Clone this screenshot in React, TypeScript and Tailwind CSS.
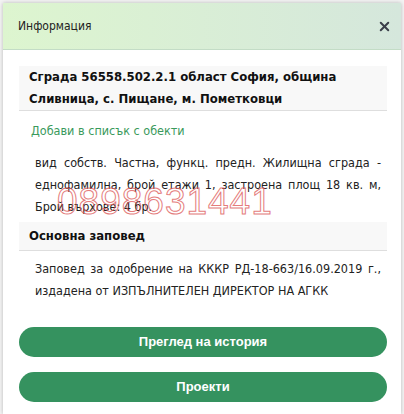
import { X } from 'lucide-react'

const body = "font-['DejaVu_Sans_Condensed','DejaVu_Sans',sans-serif]"

function SectionTitle({ children, className = '' }: { children: React.ReactNode; className?: string }) {
  return (
    <div className={`bg-[#f8f8f8] border-b border-[#dedede] px-[10px] text-[13px] font-bold text-[#111] ${className}`}>
      {children}
    </div>
  )
}

function GreenButton({ children }: { children: React.ReactNode }) {
  return (
    <button className="w-full h-[30px] rounded-full bg-[#35925f] text-white text-[13px] font-bold font-['Liberation_Sans',sans-serif]">
      {children}
    </button>
  )
}

export default function App() {
  return (
    <div className="w-[404px] h-[414px] bg-[#f4f4f4] pt-[3px] pl-[3px] pr-[3px] overflow-hidden">
      <div className={`h-full bg-white shadow-[0_0_4px_rgba(0,0,0,0.25)] flex flex-col ${body}`}>
        <div className="h-[47px] shrink-0 flex items-center justify-between pl-[15px] pr-[9px] bg-gradient-to-r from-[#ddf5cf] to-[#d5e7dc] border-b border-[#c3dcc6]">
          <span className="text-[12px] text-[#222]">Информация</span>
          <X className="w-[15px] h-[15px] text-[#3b3f4a]" strokeWidth={3.2} />
        </div>

        <div className="pl-[16px] pr-[14px] pt-[16px] flex flex-col">
          <SectionTitle className="leading-[22px]">
            Сграда 56558.502.2.1 област София, община Сливница, с. Пищане, м. Пометковци
          </SectionTitle>

          <div className="px-[12px] pt-[11px] text-[12.5px] leading-[18px] text-[#3a9a5c]">Добави в списък с обекти</div>

          <div className="relative pl-[16px] pr-[6px] pt-[12px] pb-[4px]">
            <p className="text-[12.5px] leading-[22px] text-[#222] text-justify">
              вид собств. Частна, функц. предн. Жилищна сграда - еднофамилна, брой етажи 1, застроена площ 18 кв. м, Брой върхове: 4 бр.
            </p>
            <span className="absolute left-[38px] top-[43px] text-[37px] leading-none tracking-[1px] font-['Liberation_Sans',sans-serif] text-transparent [-webkit-text-stroke:1px_#de5c5c] opacity-80 pointer-events-none">
              0898631441
            </span>
          </div>

          <SectionTitle className="leading-[20px] py-[4px]">Основна заповед</SectionTitle>

          <div className="pl-[16px] pr-[6px] pt-[7px]">
            <p className="text-[12.5px] leading-[22px] text-[#222] text-justify [text-align-last:left]">
              Заповед за одобрение на КККР РД-18-663/16.09.2019 г., издадена от ИЗПЪЛНИТЕЛЕН ДИРЕКТОР НА АГКК
            </p>
          </div>

          <div className="flex flex-col gap-[15px] pt-[25px]">
            <GreenButton>Преглед на история</GreenButton>
            <GreenButton>Проекти</GreenButton>
          </div>
        </div>
      </div>
    </div>
  )
}
